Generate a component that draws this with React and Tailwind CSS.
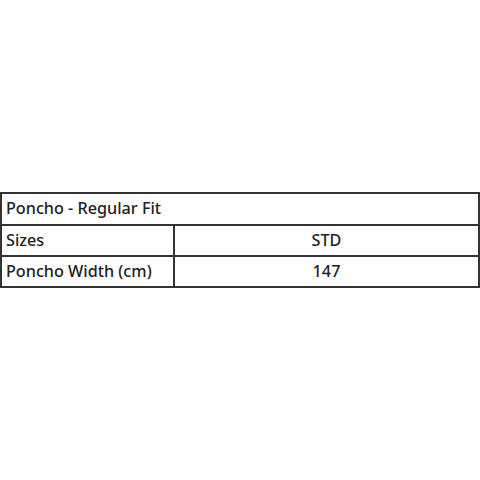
export default function App() {
  return (
    <div className="h-[480px] w-[480px] bg-white flex items-center" style={{ fontFamily: '"Noto Sans", "Open Sans", sans-serif' }}>
      <table className="w-full border-collapse border-2 border-[#333] text-[16.2px] font-medium text-[#222]">
        <tbody>
          <tr className="h-[32px]">
            <td colSpan={2} className="border-2 border-[#333] px-[4px] pb-[1px] text-left">Poncho - Regular Fit</td>
          </tr>
          <tr className="h-[31px]">
            <td className="w-[173px] border-2 border-[#333] px-[4px] pb-[1px] text-left">Sizes</td>
            <td className="border-2 border-[#333] pb-[1px] text-center">STD</td>
          </tr>
          <tr className="h-[31px]">
            <td className="border-2 border-[#333] px-[4px] pb-[1px] text-left">Poncho Width (cm)</td>
            <td className="border-2 border-[#333] pb-[1px] text-center">147</td>
          </tr>
        </tbody>
      </table>
    </div>
  )
}
